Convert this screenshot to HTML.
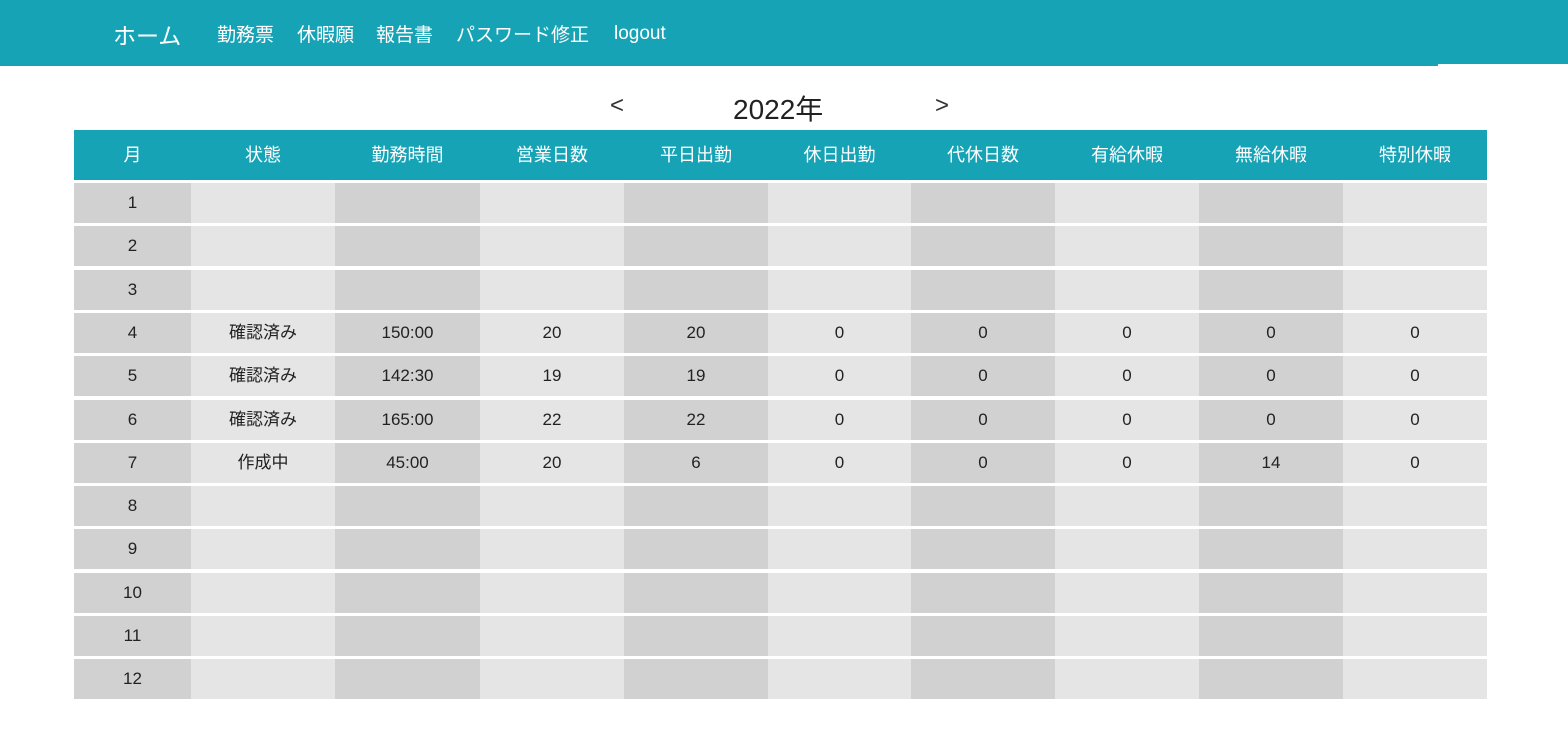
<!DOCTYPE html>
<html><head><meta charset="utf-8"><style>
*{margin:0;padding:0;box-sizing:border-box}
body{width:1568px;height:756px;background:#fff;font-family:"Liberation Sans","Noto Sans CJK JP",sans-serif;position:relative;overflow:hidden;color:#222}
.nav{position:absolute;left:0;top:0;width:1568px;height:66px;background:#17a3b6}
.nav span{position:absolute;top:20px;color:#fff;font-size:19px;white-space:nowrap}
.t{position:absolute;white-space:nowrap}
.row{position:absolute;left:74px;width:1413px;height:40px;display:flex}
.row div{height:40px;line-height:40px;text-align:center;font-size:17px}
.hd{background:#17a3b6;height:50px;top:130px}
.hd div{height:50px;line-height:50px;color:#fff;font-size:18px}
</style></head><body>
<div class="nav">
<span style="left:113px;font-size:23px;top:17px">ホーム</span>
<span style="left:217px">勤務票</span>
<span style="left:297px">休暇願</span>
<span style="left:376px">報告書</span>
<span style="left:456px">パスワード修正</span>
<span style="left:614px;top:23px">logout</span>
</div>
<div style="position:absolute;left:1438px;top:64px;width:130px;height:2px;background:#fff"></div>
<div class="t" style="left:610px;top:92px;font-size:24px;color:#333">&lt;</div>
<div class="t" style="left:733px;top:88px;font-size:28px">2022年</div>
<div class="t" style="left:935px;top:92px;font-size:24px;color:#333">&gt;</div>
<div id="tb"></div>
<script>
(function(){
var w=[117,144,145,144,144,143,144,144,144,144];
var hd=["月","状態","勤務時間","営業日数","平日出勤","休日出勤","代休日数","有給休暇","無給休暇","特別休暇"];
var data={4:["確認済み","150:00","20","20","0","0","0","0","0"],5:["確認済み","142:30","19","19","0","0","0","0","0"],6:["確認済み","165:00","22","22","0","0","0","0","0"],7:["作成中","45:00","20","6","0","0","0","14","0"]};
var h='<div class="row hd">';
hd.forEach(function(x,i){h+='<div style="width:'+w[i]+'px">'+x+'</div>'});
h+='</div>';
for(var r=1;r<=12;r++){
 var ty=183+(r-1)*43.3;
 h+='<div class="row" style="top:'+ty+'px">';
 for(var c=0;c<10;c++){
  var v=c==0?r:(data[r]?data[r][c-1]:"");
  h+='<div style="width:'+w[c]+'px;background:'+(c%2==0?'#d1d1d1':'#e5e5e5')+'">'+v+'</div>';
 }
 h+='</div>';
}
document.getElementById('tb').innerHTML=h;
})();
</script>
</body></html>
